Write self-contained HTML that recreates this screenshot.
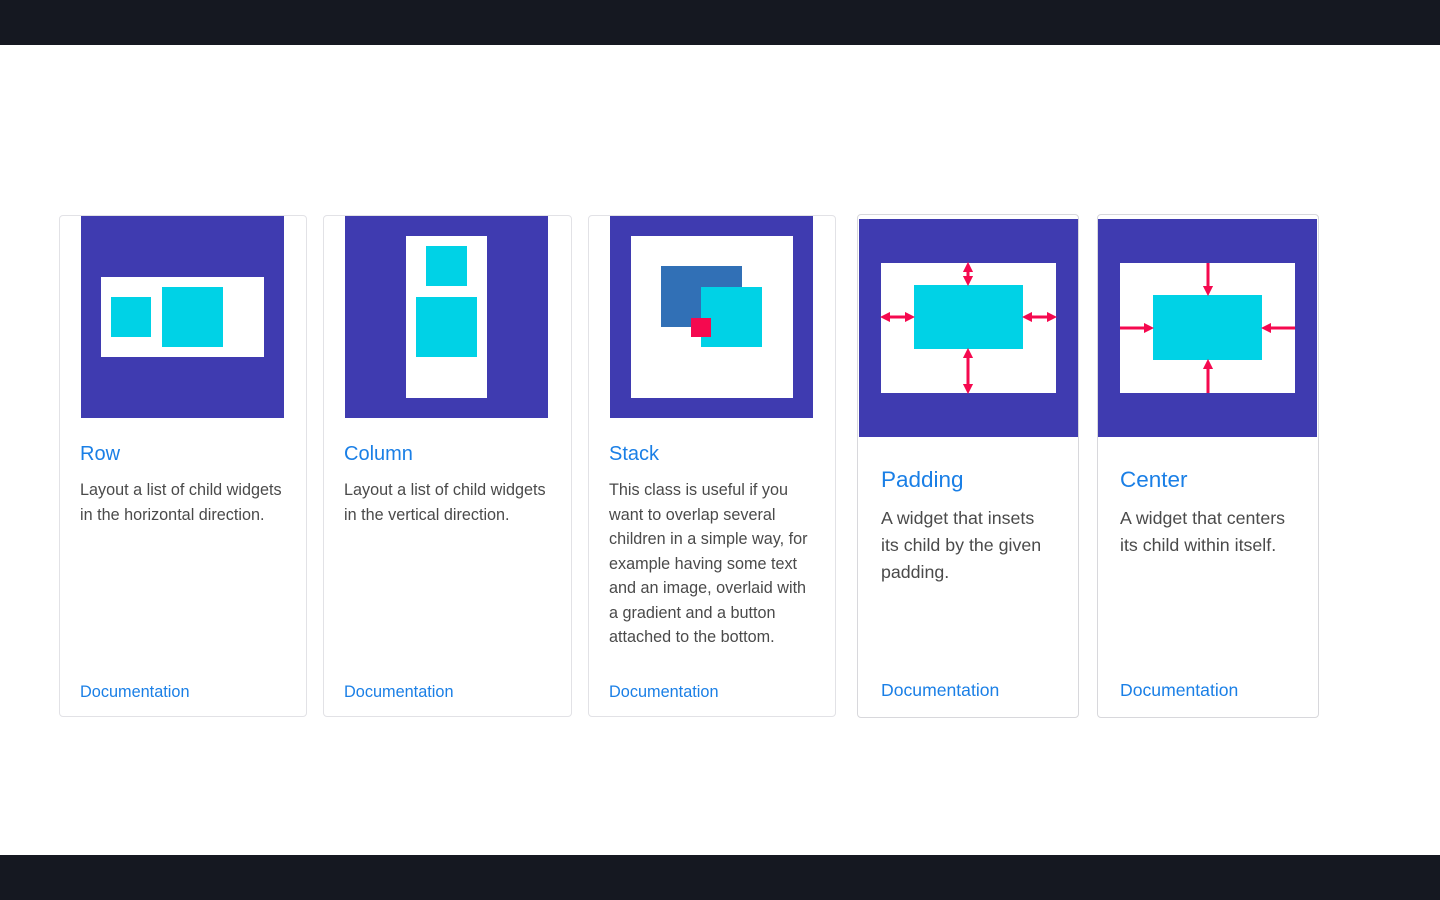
<!DOCTYPE html>
<html><head><meta charset="utf-8"><style>
body{margin:0;width:1440px;height:900px;position:relative;background:#fff;font-family:"Liberation Sans",Arial,sans-serif;overflow:hidden}
.bar{position:absolute;left:0;width:1440px;background:#151821}
.card{position:absolute;border:1px solid #e2e2e6;border-radius:4px;box-sizing:border-box;background:#fff}
.t{position:absolute;color:#1a7fe6;white-space:nowrap}
.p{position:absolute;color:#4a4a4a;white-space:nowrap}
svg{position:absolute;left:0;top:0}
</style></head><body>
<div class="bar" style="top:0;height:45px"></div>
<div class="bar" style="top:855px;height:45px"></div>
<div class="card" style="left:59px;top:215px;width:248px;height:502px"></div>
<div class="card" style="left:323px;top:215px;width:249px;height:502px"></div>
<div class="card" style="left:588px;top:215px;width:248px;height:502px"></div>
<div class="card" style="left:857px;top:214px;width:222px;height:504px;border-color:#d8d8dc"></div>
<div class="card" style="left:1097px;top:214px;width:222px;height:504px;border-color:#d8d8dc"></div>
<svg width="1440" height="900">
<defs>
<marker id="a" markerWidth="3.4" markerHeight="3.4" refX="1.7" refY="1.7" orient="auto-start-reverse" markerUnits="strokeWidth"><path d="M0,0L3.4,1.7L0,3.4z" fill="#f5094f"/></marker>
</defs>
<rect x="81" y="216" width="203" height="202" fill="#3f3bb0"/>
<rect x="101" y="277" width="163" height="80" fill="#fff"/>
<rect x="111" y="297" width="40" height="40" fill="#00d2e6"/>
<rect x="162" y="287" width="61" height="60" fill="#00d2e6"/>
<rect x="345" y="216" width="203" height="202" fill="#3f3bb0"/>
<rect x="406" y="236" width="81" height="162" fill="#fff"/>
<rect x="426" y="246" width="41" height="40" fill="#00d2e6"/>
<rect x="416" y="297" width="61" height="60" fill="#00d2e6"/>
<rect x="610" y="216" width="203" height="202" fill="#3f3bb0"/>
<rect x="631" y="236" width="162" height="162" fill="#fff"/>
<rect x="661" y="266" width="81" height="61" fill="#3170b6"/>
<rect x="701" y="287" width="61" height="60" fill="#00d2e6"/>
<rect x="691" y="318" width="20" height="19" fill="#f5094f"/>
<rect x="859" y="219" width="219" height="218" fill="#3f3bb0"/>
<rect x="881" y="263" width="175" height="130" fill="#fff"/>
<rect x="914" y="285" width="109" height="64" fill="#00d2e6"/>
<g stroke="#f5094f" stroke-width="3" fill="none">
<line x1="968" y1="267" x2="968" y2="281" marker-start="url(#a)" marker-end="url(#a)"/>
<line x1="968" y1="353" x2="968" y2="389" marker-start="url(#a)" marker-end="url(#a)"/>
<line x1="885" y1="317" x2="910" y2="317" marker-start="url(#a)" marker-end="url(#a)"/>
<line x1="1027" y1="317" x2="1052" y2="317" marker-start="url(#a)" marker-end="url(#a)"/>
</g>
<rect x="1098" y="219" width="219" height="218" fill="#3f3bb0"/>
<rect x="1120" y="263" width="175" height="130" fill="#fff"/>
<rect x="1153" y="295" width="109" height="65" fill="#00d2e6"/>
<g stroke="#f5094f" stroke-width="3" fill="none">
<line x1="1208" y1="263" x2="1208" y2="291" marker-end="url(#a)"/>
<line x1="1208" y1="393" x2="1208" y2="364" marker-end="url(#a)"/>
<line x1="1120" y1="328" x2="1149" y2="328" marker-end="url(#a)"/>
<line x1="1295" y1="328" x2="1266" y2="328" marker-end="url(#a)"/>
</g>
</svg>
<div class="t" style="left:80px;top:443px;font-size:20px">Row</div>
<div class="p" style="left:80px;top:478px;font-size:16.2px;line-height:24.5px">Layout a list of child widgets<br>in the horizontal direction.</div>
<div class="t" style="left:80px;top:683px;font-size:16.3px">Documentation</div>
<div class="t" style="left:344px;top:443px;font-size:20px">Column</div>
<div class="p" style="left:344px;top:478px;font-size:16.2px;line-height:24.5px">Layout a list of child widgets<br>in the vertical direction.</div>
<div class="t" style="left:344px;top:683px;font-size:16.3px">Documentation</div>
<div class="t" style="left:609px;top:443px;font-size:20px">Stack</div>
<div class="p" style="left:609px;top:478px;font-size:16.2px;line-height:24.5px">This class is useful if you<br>want to overlap several<br>children in a simple way, for<br>example having some text<br>and an image, overlaid with<br>a gradient and a button<br>attached to the bottom.</div>
<div class="t" style="left:609px;top:683px;font-size:16.3px">Documentation</div>
<div class="t" style="left:881px;top:467px;font-size:22.5px">Padding</div>
<div class="p" style="left:881px;top:505px;font-size:17.8px;line-height:27px">A widget that insets<br>its child by the given<br>padding.</div>
<div class="t" style="left:881px;top:680px;font-size:17.6px">Documentation</div>
<div class="t" style="left:1120px;top:467px;font-size:22.5px">Center</div>
<div class="p" style="left:1120px;top:505px;font-size:17.8px;line-height:27px">A widget that centers<br>its child within itself.</div>
<div class="t" style="left:1120px;top:680px;font-size:17.6px">Documentation</div>
</body></html>
